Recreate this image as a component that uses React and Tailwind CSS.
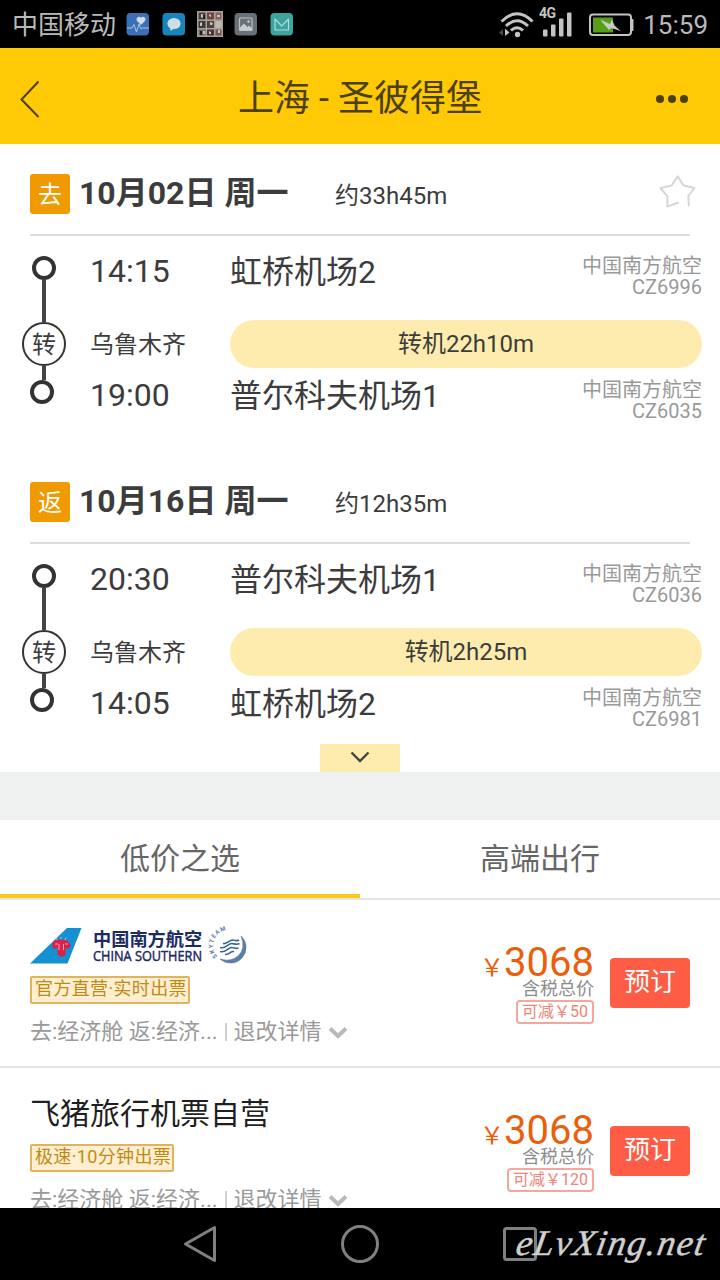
import React, { useState } from "react";

const legs = [
  {
    id: "go",
    tag: "去",
    date: "10月02日 周一",
    duration: "约33h45m",
    from: { time: "14:15", airport: "虹桥机场2", airline: "中国南方航空", flight: "CZ6996" },
    to: { time: "19:00", airport: "普尔科夫机场1", airline: "中国南方航空", flight: "CZ6035" },
    transfer: { city: "乌鲁木齐", wait: "转机22h10m" },
  },
  {
    id: "back",
    tag: "返",
    date: "10月16日 周一",
    duration: "约12h35m",
    from: { time: "20:30", airport: "普尔科夫机场1", airline: "中国南方航空", flight: "CZ6036" },
    to: { time: "14:05", airport: "虹桥机场2", airline: "中国南方航空", flight: "CZ6981" },
    transfer: { city: "乌鲁木齐", wait: "转机2h25m" },
  },
];

const offers = [
  { id: 1, official: true, label: "官方直营·实时出票", price: 3068, discount: "可减￥50" },
  { id: 2, name: "飞猪旅行机票自营", label: "极速·10分钟出票", price: 3068, discount: "可减￥120" },
];

const tabs = ["低价之选", "高端出行"];

const StatusBar = () => (
  <div className="h-12 bg-black flex items-center justify-between px-3 text-[#b9b9b9]">
    <div className="flex items-center">
      <span className="text-[26px] leading-[46px] pt-[2px] w-[105px] whitespace-nowrap">中国移动</span>
      {/* health */}
      <svg className="ml-[9px]" width="24" height="24" viewBox="0 0 24 24">
        <rect x="0.5" y="1" width="22.5" height="22.5" rx="4" fill="#3a70b4" />
        <path d="M15 13l-4.2-4.3a2.6 2.6 0 0 1 4.2-3 2.6 2.6 0 0 1 4.2 3z" fill="#d4dce6" />
        <path d="M1 16h5l2-3.5 2.5 7.5 2.5-8 2 5 1.5-1H23" fill="none" stroke="#a9c6e8" strokeWidth="1" />
      </svg>
      {/* message */}
      <svg className="ml-3" width="24" height="24" viewBox="0 0 24 24">
        <rect x="0.5" y="1" width="22.5" height="22.5" rx="4" fill="#1784bb" />
        <ellipse cx="12" cy="11.5" rx="6.6" ry="5.6" fill="#cfdde5" />
        <path d="M8 15l.6 4 4-3z" fill="#cfdde5" />
      </svg>
      {/* photo grid */}
      <svg className="ml-[11px] mb-[1px]" width="26" height="26" viewBox="0 0 26 26">
        <rect width="26" height="26" fill="#a9a19d" />
        <path d="M1.5 1.5h7v7h-7zM10 10h7v7h-7z" fill="#4d4441" />
        <path d="M10 1.5h7v7h-7z" fill="#70443f" />
        <path d="M18.5 1.5h6v7h-6z" fill="#8f5f60" />
        <path d="M1.5 10h7v7h-7z" fill="#3b3737" />
        <path d="M18.5 10h6v7h-6z" fill="#bdb9ad" />
        <path d="M1.5 18.5h7v6h-7z" fill="#70675d" />
        <path d="M10 18.5h7v6h-7z" fill="#493334" />
        <path d="M18.5 18.5h6v6h-6z" fill="#6b5b4f" />
        <path d="M4 3l3 1-1 3-2-1zM12 3l2 1v2l-2-1zM20 4h3v2h-3zM3 12l2-1v4H3zM13 11l3 1-1 2h-2zM6 20h2v3H6zM12 20l2 1v2h-2zM21 19h2v3h-2z" fill="#cdc3bb" />
        <path d="M6 4h2v4H6zM3 20h2v4H3z" fill="#201c1c" />
      </svg>
      {/* gallery */}
      <svg className="ml-[11px]" width="24" height="24" viewBox="0 0 24 24">
        <rect x="0.5" y="1" width="22.5" height="22.5" rx="4" fill="#687178" />
        <rect x="5.5" y="6" width="12.5" height="12.5" rx="1" fill="none" stroke="#bfc3c6" strokeWidth="1.2" />
        <path d="M6 15.5l4-4 3.5 3.5 1.5-1.5 3 3V18H6z" fill="#c9cccf" />
        <circle cx="14.5" cy="9.5" r="1.3" fill="#c9cccf" />
      </svg>
      {/* mail */}
      <svg className="ml-3" width="24" height="24" viewBox="0 0 24 24">
        <rect x="0.5" y="1" width="22.5" height="22.5" rx="4" fill="#3da39d" />
        <path d="M5 6.5V18h13.5V6.5M5 7l6.7 7 6.8-7" fill="none" stroke="#b5dcd8" strokeWidth="1.2" />
      </svg>
    </div>
    <div className="flex items-center">
      <svg width="37" height="28" viewBox="1 0 37 28" fill="none" stroke="#c4c4c4" strokeWidth="3">
        <path d="M3.5 11.5Q19 -4 34.5 11.5" />
        <path d="M8 16Q19 5.5 30 16" />
        <path d="M13 20.5Q19 15 25 20.5" />
        <circle cx="19.5" cy="24.5" r="2.7" fill="#c4c4c4" stroke="none" />
        <path d="M7 18.5l4.5 4L7 26z" fill="#c4c4c4" stroke="none" />
        <path d="M5 19L1 22.5 5 26z" fill="#4a4a4a" stroke="none" />
      </svg>
      <svg className="ml-[3px] mb-[2px]" width="36" height="32" viewBox="0 0 36 32" fill="#c4c4c4">
        <text x="0" y="11" fontSize="14" fontWeight="700" textLength="17">4G</text>
        <rect x="4" y="22.5" width="4.5" height="7" rx="1" />
        <rect x="12" y="17.5" width="4.5" height="12" rx="1" />
        <rect x="20" y="11.5" width="4.5" height="18" rx="1" />
        <rect x="28" y="5.5" width="4.5" height="24" rx="1" />
      </svg>
      <svg className="ml-[13px] mt-[2px]" width="46" height="24" viewBox="0 0 46 24">
        <rect x="2" y="1.5" width="41" height="20.5" rx="3" fill="none" stroke="#c4c4c4" strokeWidth="2" />
        <rect x="43" y="6" width="2.5" height="12" rx="1" fill="#c4c4c4" />
        <rect x="5" y="4.5" width="20" height="15" fill="#56a019" />
        <path d="M12 6.5L22 11l2-4.5 2.5 6 6 5.5-9-3-2.5 2z" fill="#c9c9c9" />
      </svg>
      <span className="ml-[9px] text-[26px] leading-[46px] pt-[2px]">15:59</span>
    </div>
  </div>
);

const Stop = ({ stop, className }) => (
  <div className={`flex items-start ${className}`}>
    <span className="w-[140px] text-[32px] leading-[34px]">{stop.time}</span>
    <span className="flex-1 text-[32px] leading-[36px] whitespace-nowrap">{stop.airport}</span>
    <div className="text-right text-[20px] text-[#999]">
      <p className="leading-[24px]">{stop.airline}</p>
      <p className="leading-[18px]">{stop.flight}</p>
    </div>
  </div>
);

const Leg = ({ leg, favorite }) => (
  <section className="h-[308px] text-[#3c3c3c]">
    <div className="mx-[30px] h-[92px] border-b-2 border-[#dcdcdc] pt-[30px] flex items-start">
      <span className="w-10 h-10 rounded-[3px] bg-[#ee9a00] text-white text-[24px] leading-[42px] text-center">
        {leg.tag}
      </span>
      <h2 className="ml-[9px] w-[256px] text-[32px] leading-[38px] font-bold whitespace-nowrap">{leg.date}</h2>
      <span className="text-[24px] leading-[44px]">{leg.duration}</span>
      {favorite && (
        <svg className="ml-auto -mr-[6px] mt-[1px]" width="38" height="36" viewBox="0 0 38 36" fill="none" stroke="#d6d6d6" strokeWidth="2" strokeLinejoin="round" strokeLinecap="round">
          <path d="M20 27.7L9.3 31.5l.2-10L2.5 13l11.2-2.5 6-9.2 5.8 9.2 11 2.5-6.2 8 .5 9.5" />
        </svg>
      )}
    </div>
    <div className="flex">
      <div className="ml-[22px] w-11 pt-5 flex flex-col items-center">
        <span className="w-6 h-6 rounded-full border-4 border-[#333]" />
        <span className="w-1 h-[42px] bg-[#444]" />
        <span className="w-11 h-11 rounded-full border-2 border-[#333] text-[24px] leading-[42px] text-center">转</span>
        <span className="w-1 h-[14px] bg-[#444]" />
        <span className="mr-1 w-6 h-6 rounded-full border-4 border-[#333]" />
      </div>
      <div className="flex-1 ml-6 mr-[18px]">
        <Stop stop={leg.from} className="h-[84px] pt-[18px]" />
        <div className="flex h-12 text-[24px] leading-[49px]">
          <span className="w-[140px] leading-[50px]">{leg.transfer.city}</span>
          <span className="flex-1 rounded-full bg-[#fdecad] text-center">{leg.transfer.wait}</span>
        </div>
        <Stop stop={leg.to} className="pt-[10px]" />
      </div>
    </div>
  </section>
);

const AirlineLogo = () => (
  <div className="flex h-[42px] pt-[6px] text-[#1d2b63]">
    <svg width="52" height="36" viewBox="0 0 52 36">
      <path d="M37 0h14.500L37.500 35.500H0z" fill="#1590d2" />
      <path d="M22.500 19c-1-6 3-8 7.500-7 5-1 10 1 10.500 6-.5 3-3 3.500-5 1.500v6.500c-1 3.500-6.500 3.500-8 0v-7c-1.500 2.500-4.500 2.500-5 0z" fill="#dc2144" />
      <path d="M27 12l-.5-2M31 11V9M35 12l1-2.500M29 16v6M33.500 16v6M25 16h3M35 16h3" stroke="#e9a6b4" strokeWidth="1" />
    </svg>
    <div className="ml-[11px] w-[110px] whitespace-nowrap">
      <p className="pt-[2px] text-[18.2px] leading-[20px] font-bold">中国南方航空</p>
      <svg className="-mt-[3px] overflow-visible" width="110" height="17" viewBox="0 0 110 17">
        <text x="0" y="13.5" fontSize="15" fontFamily="Open Sans, sans-serif" fill="#1d2b63" stroke="#1d2b63" strokeWidth="0.5" textLength="109" lengthAdjust="spacingAndGlyphs">CHINA SOUTHERN</text>
      </svg>
    </div>
    <svg className="ml-[8px] overflow-visible" width="36" height="36" viewBox="0 0 36 36">
      <path id="skyArc" d="M6.500 28.500A14 14 0 0 1 28 6.500" fill="none" />
      <text fontSize="6" fontWeight="700" fill="#5d7ba4">
        <textPath href="#skyArc" textLength="34">SKYTEAM</textPath>
      </text>
      <path d="M30 8A15.300 15.300 0 0 1 9 31q11 3.500 18.500-3.500T30 8z" fill="#5d7da8" stroke="#5d7da8" strokeWidth="0.6" />
      <path d="M12 15.500c5 1 6-4 10-3.500 3 .3 4 1.500 6 0M9 19.500c6 2 8-4.500 12-4 3 .5 5 1.500 7.500 0M9 23.500c6 2 8-4.500 12-4 3 .3 4 1.500 6.500 .5M14 26.500c5 0 5-3.500 9-3" fill="none" stroke="#3f6496" strokeWidth="1.6" />
    </svg>
  </div>
);

const Offer = ({ offer }) => (
  <article className="h-[168px] border-b-2 border-[#e6e6e6] flex px-[30px]">
    <div className="w-[330px] pt-[22px]">
      {offer.official ? (
        <AirlineLogo />
      ) : (
        <h3 className="h-[42px] text-[30px] leading-[47px] text-[#1f1f1f]">{offer.name}</h3>
      )}
      <div className="mt-3 flex">
        <span className="h-7 rounded-[2px] border-2 border-[#e0b45c] bg-[#ffefd0] pl-[3px] pr-[1px] text-[18px] leading-[22px] tracking-[0.36px] text-[#bf8a14] whitespace-nowrap">
          {offer.label}
        </span>
      </div>
      <div className="mt-3 flex items-center text-[22px] leading-[31px] text-[#999] whitespace-nowrap">
        <span>去:经济舱 返:经济...</span>
        <span className="mx-[7px] w-[2px] h-[18px] bg-[#d0d0d0]" />
        <span>退改详情</span>
        <svg className="ml-[6px] mt-[2px]" width="20" height="14" viewBox="0 0 20 14" fill="none" stroke="#b9b9b9" strokeWidth="4">
          <path d="M2 2.500l8 7.500 8-7.500" />
        </svg>
      </div>
    </div>
    <div className="flex-1 flex flex-col items-end pt-[43px] pr-4">
      <p className="flex items-baseline text-[40px] leading-[40px] text-[#e95f0c]">
        <span className="text-[24px] w-[24px] whitespace-nowrap">￥</span>
        {offer.price}
      </p>
      <p className="-mt-[7px] text-[18px] leading-[16px] text-[#8c8c8c]">含税总价</p>
      <span className="mt-[3px] h-6 rounded-[4px] border-2 border-[#f4a79d] px-1 text-[16px] leading-[19px] text-[#ef8478] whitespace-nowrap">
        {offer.discount}
      </span>
    </div>
    <button className="mt-[58px] w-20 h-[50px] rounded-[4px] bg-[#ff5c46] text-white text-[26px] leading-[48px] pb-[2px]">
      预订
    </button>
  </article>
);

const App = () => {
  const [activeTab, setActiveTab] = useState(0);

  return (
    <div className="w-[720px] h-[1280px] overflow-hidden flex flex-col bg-white font-['Roboto','Noto_Sans_CJK_SC',sans-serif]">
      <StatusBar />
      <header className="h-24 shrink-0 bg-[#ffc905] px-5 flex items-center justify-between text-[#4a4011]">
        <svg className="mt-[5px]" width="20" height="38" viewBox="0 0 20 38" fill="none" stroke="currentColor" strokeWidth="2">
          <path d="M18.500 1.500L1.500 19.500l17 17.500" />
        </svg>
        <h1 className="ml-6 pt-[6px] text-[36px] leading-[54px]">上海 - 圣彼得堡</h1>
        <svg className="mr-3 mt-[6px]" width="32" height="8" viewBox="0 0 32 8" fill="currentColor">
          <circle cx="4" cy="4" r="4" />
          <circle cx="16" cy="4" r="4" />
          <circle cx="28" cy="4" r="4" />
        </svg>
      </header>

      <main className="h-[1064px] shrink-0 overflow-hidden">
        <div className="h-[628px]">
          <Leg leg={legs[0]} favorite />
          <div className="h-[292px]">
            <Leg leg={legs[1]} />
          </div>
          <button className="mx-auto flex w-20 h-7 pb-[2px] items-center justify-center bg-[#fdecad]">
            <svg width="20" height="12" viewBox="0 0 20 12" fill="none" stroke="#444" strokeWidth="2.4">
              <path d="M1.500 1.500L10 10l8.500-8.500" />
            </svg>
          </button>
        </div>
        <div className="h-12 bg-[#eff1f1]" />
        <nav className="flex h-20 border-b-2 border-[#e6e6e6]">
          {tabs.map((tab, i) => (
            <button
              key={tab}
              onClick={() => setActiveTab(i)}
              className={`flex-1 pt-[4px] text-[30px] leading-[70px] text-[#666] border-b-4 ${
                activeTab === i ? "border-[#f9cb1a]" : "border-transparent"
              }`}
            >
              {tab}
            </button>
          ))}
        </nav>
        {offers.map((offer) => (
          <Offer key={offer.id} offer={offer} />
        ))}
      </main>

      <footer className="relative h-[72px] shrink-0 bg-black">
        <div className="h-full flex items-center pl-[183px]">
          <svg width="34" height="38" viewBox="0 0 34 38" fill="none" stroke="#808080" strokeWidth="3" strokeLinejoin="round">
            <path d="M31.500 2.500v33L2.500 19z" />
          </svg>
          <svg className="ml-[123px]" width="40" height="40" viewBox="0 0 40 40" fill="none" stroke="#808080" strokeWidth="3">
            <circle cx="20" cy="20" r="17.500" />
          </svg>
          <svg className="ml-[123px]" width="34" height="34" viewBox="0 0 34 34" fill="none" stroke="#808080" strokeWidth="3">
            <rect x="1.500" y="1.500" width="31" height="31" rx="2" />
          </svg>
        </div>
        <svg className="absolute right-0 top-0" width="210" height="72" viewBox="0 0 210 72">
          <text x="4" y="47" fontSize="36" fontStyle="italic" fontFamily="Liberation Serif, cursive" fill="#d0d0d0" stroke="#d0d0d0" strokeWidth="0.5" textLength="188" transform="skewX(-10) translate(9 0)">eLvXing.net</text>
        </svg>
      </footer>
    </div>
  );
};

export default App;
